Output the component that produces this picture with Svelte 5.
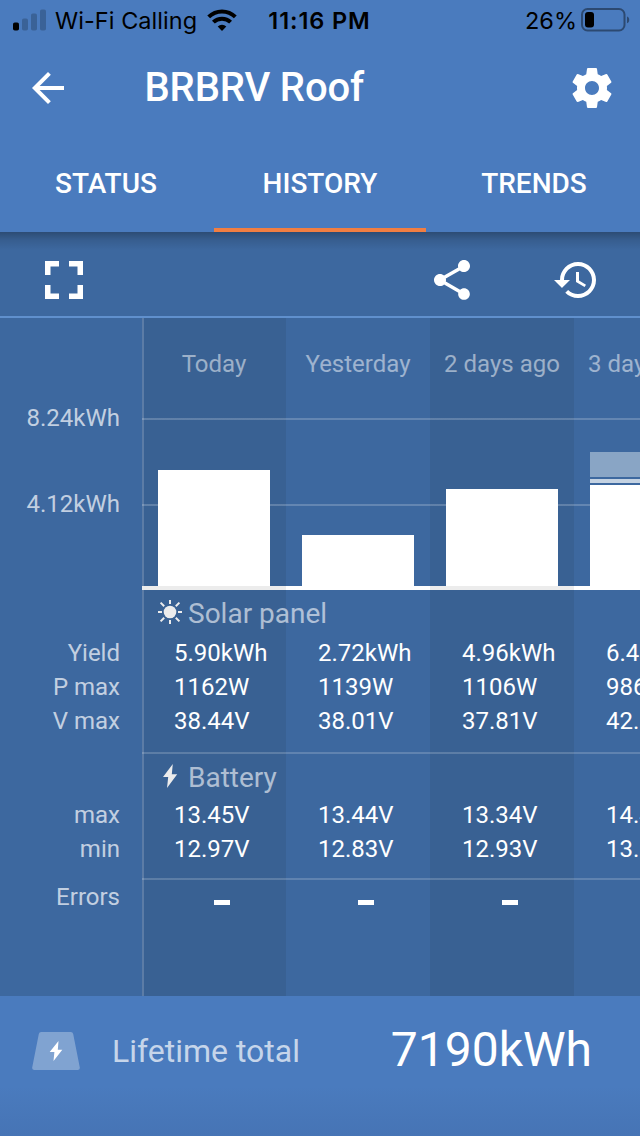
<script>
  const tabs = ['Status', 'History', 'Trends'];
  let activeTab = $state('History');

  // bar segments are stacked top to bottom, heights in px
  const days = [
    { label: 'Today', bulk: 116, yield: '5.90kWh', pMax: '1162W', vMax: '38.44V', max: '13.45V', min: '12.97V' },
    { label: 'Yesterday', bulk: 51, yield: '2.72kWh', pMax: '1139W', vMax: '38.01V', max: '13.44V', min: '12.83V' },
    { label: '2 days ago', bulk: 97, yield: '4.96kWh', pMax: '1106W', vMax: '37.81V', max: '13.34V', min: '12.93V' },
    { label: '3 days ago', float: 25, absorption: 4, bulk: 101, yield: '6.48kWh', pMax: '986W', vMax: '42.15V', max: '14.40V', min: '13.02V' }
  ];

  const solarRows = [
    { label: 'Yield', key: 'yield' },
    { label: 'P max', key: 'pMax' },
    { label: 'V max', key: 'vMax' }
  ];
  const batteryRows = [
    { label: 'max', key: 'max' },
    { label: 'min', key: 'min' }
  ];
</script>

{#snippet rows(list)}
  {#each list as row}
    <div class="row">
      <span class="label">{row.label}</span>
      <div class="cells">
        {#each days as day}
          <span class="value">{day[row.key]}</span>
        {/each}
      </div>
    </div>
  {/each}
{/snippet}

<div class="screen">
  <header>
    <div class="statusbar">
      <div class="carrier">
        <svg width="34" height="22" viewBox="0 0 34 22">
          <rect x="0" y="13.5" width="6" height="8" rx="1.8" />
          <g opacity="0.2">
            <rect x="9" y="9.5" width="6" height="12" rx="1.8" />
            <rect x="18" y="4.5" width="6" height="17" rx="1.8" />
            <rect x="27" y="0.5" width="6" height="21" rx="1.8" />
          </g>
        </svg>
        <span class="network">Wi-Fi Calling</span>
        <svg class="wifi" width="30" height="22" viewBox="0 0 30 22">
          <g fill="none" stroke="#000" stroke-width="4">
            <path d="M1.700 7.900a18.800 18.800 0 0 1 26.600 0" />
            <path d="M6.400 13.200a12.200 12.200 0 0 1 17.200 0" />
          </g>
          <path d="M15 22l-4.300-4.400a6.200 6.200 0 0 1 8.600 0z" />
        </svg>
      </div>
      <span class="clock">11:16 PM</span>
      <div class="power">
        <span>26%</span>
        <svg width="49" height="24" viewBox="0 0 49 24">
          <g opacity="0.4">
            <rect x="1" y="1" width="42.5" height="21.5" rx="5.5" fill="none" stroke="#000" stroke-width="2" />
            <path d="M46 8.5c1.6.6 2.2 1.8 2.2 3.4s-.6 2.8-2.2 3.400z" />
          </g>
          <rect x="4" y="4" width="9" height="15.5" rx="3" />
        </svg>
      </div>
    </div>

    <div class="appbar">
      <svg class="icon" viewBox="0 0 24 24"><path d="M20 11H7.83l5.59-5.59L12 4l-8 8 8 8 1.41-1.41L7.83 13H20v-2z" /></svg>
      <h1>BRBRV Roof</h1>
      <svg class="icon" viewBox="0 0 24 24"><path d="M19.43 12.98c.04-.32.07-.64.07-.98s-.03-.66-.07-.98l2.11-1.65c.19-.15.24-.42.12-.64l-2-3.46c-.12-.22-.39-.3-.61-.22l-2.49 1c-.52-.4-1.08-.73-1.69-.98l-.38-2.65C14.46 2.18 14.25 2 14 2h-4c-.25 0-.46.18-.49.42l-.38 2.65c-.61.25-1.17.59-1.69.98l-2.49-1c-.23-.09-.49 0-.61.22l-2 3.46c-.13.22-.07.49.12.64l2.11 1.65c-.04.32-.07.65-.07.98s.03.66.07.98l-2.11 1.65c-.19.15-.24.42-.12.64l2 3.46c.12.22.39.3.61.22l2.49-1c.52.4 1.08.73 1.69.98l.38 2.65c.03.24.24.42.49.42h4c.25 0 .46-.18.49-.42l.38-2.65c.61-.25 1.17-.59 1.69-.98l2.49 1c.23.09.49 0 .61-.22l2-3.46c.12-.22.07-.49-.12-.64l-2.11-1.65zM12 15.5c-1.93 0-3.5-1.57-3.5-3.5s1.57-3.5 3.5-3.5 3.5 1.57 3.5 3.5-1.57 3.5-3.5 3.5z" /></svg>
    </div>

    <nav>
      {#each tabs as tab}
        <button class={activeTab === tab ? 'tab active' : 'tab'} onclick={() => (activeTab = tab)}>{tab}</button>
      {/each}
    </nav>
  </header>

  <div class="toolbar">
    <svg class="expand" width="38" height="38" viewBox="0 0 38 38">
      <path d="M0 0h14v5.5H5.5V14H0zM24 0h14v14h-5.5V5.5H24zM0 24h5.5v8.5H14V38H0zM32.5 24H38v14H24v-5.5h8.5z" />
    </svg>
    <svg class="icon share" viewBox="0 0 24 24"><path d="M18 16.08c-.76 0-1.44.3-1.96.77L8.91 12.7c.05-.23.09-.46.09-.7s-.04-.47-.09-.7l7.05-4.11c.54.5 1.25.81 2.04.81 1.66 0 3-1.34 3-3s-1.34-3-3-3-3 1.34-3 3c0 .24.04.47.09.7L8.04 9.81C7.5 9.31 6.79 9 6 9c-1.66 0-3 1.34-3 3s1.34 3 3 3c.79 0 1.5-.31 2.04-.81l7.12 4.16c-.05.21-.08.43-.08.65 0 1.61 1.31 2.92 2.92 2.92 1.61 0 2.92-1.31 2.92-2.92s-1.31-2.92-2.92-2.92z" /></svg>
    <svg class="icon" viewBox="0 0 24 24"><path d="M13 3c-4.97 0-9 4.03-9 9H1l3.89 3.89.07.14L9 12H6c0-3.87 3.13-7 7-7s7 3.13 7 7-3.13 7-7 7c-1.93 0-3.68-.79-4.94-2.06l-1.42 1.42C8.27 19.99 10.51 21 13 21c4.97 0 9-4.03 9-9s-4.03-9-9-9zm-1 5v5l4.28 2.54.72-1.21-3.5-2.08V8H12z" /></svg>
  </div>

  <main>
    <div class="row names">
      <div class="cells">
        {#each days as day}
          <span class="day">{day.label}</span>
        {/each}
      </div>
    </div>

    <div class="row plot">
      <div class="axis">
        <span>8.24kWh</span>
        <span>4.12kWh</span>
      </div>
      <div class="cells">
        {#each days as day}
          <div class="bar">
            {#if day.float}<div class="float" style="height: {day.float}px"></div>{/if}
            {#if day.absorption}<div class="absorption" style="height: {day.absorption}px"></div>{/if}
            <div class="bulk" style="height: {day.bulk}px"></div>
          </div>
        {/each}
      </div>
    </div>

    <section class="solar">
      <h2>
        <svg width="24" height="24" viewBox="0 0 24 24">
          <circle cx="12" cy="12" r="6.3" />
          <path d="M12 0v4M12 20v4M0 12h4M20 12h4M2.6 2.6l3.6 3.6M17.8 17.8l3.6 3.6M2.6 21.4l3.6-3.6M17.8 6.2l3.6-3.6" stroke="#ececec" stroke-width="2" />
        </svg>
        Solar panel
      </h2>
      {@render rows(solarRows)}
    </section>

    <section class="battery">
      <h2>
        <svg width="24" height="24" viewBox="0 0 24 24"><path d="M14.800 0L5 13h5.200L9 24l10.200-13.800h-5.400z" /></svg>
        Battery
      </h2>
      {@render rows(batteryRows)}
    </section>

    <section class="errors">
      <div class="row">
        <span class="label">Errors</span>
        <div class="cells">
          {#each days as day}
            <span class="none"><i></i></span>
          {/each}
        </div>
      </div>
    </section>
  </main>

  <footer>
    <svg width="48" height="38" viewBox="0 0 48 38">
      <path d="M9.2 0h29.6q2 0 2.4 2l6.6 33.4q.4 2.6-2.2 2.6H2.4q-2.6 0-2.2-2.6L6.8 2q.4-2 2.400-2z" opacity="0.3" />
      <path d="M26.500 9.100L17.700 20h4.700l-.9 9 8.800-11.300h-4.500z" />
    </svg>
    <span class="caption">Lifetime total</span>
    <span class="total">7190kWh</span>
  </footer>
</div>

<style>
  :global(body) {
    margin: 0;
  }
  .screen {
    display: flex;
    flex-direction: column;
    width: 640px;
    height: 1136px;
    overflow: hidden;
    background: #3d689f;
    color: #fff;
    font-family: Roboto, sans-serif;
    font-size: 24px;
  }
  svg {
    display: block;
    flex: none;
    fill: #fff;
  }
  .icon {
    width: 48px;
    height: 48px;
  }

  header {
    height: 232px;
    background: #4a7bbe;
  }
  .statusbar {
    display: grid;
    grid-template-columns: 1fr auto 1fr;
    align-items: center;
    height: 40px;
    padding: 0 10px 0 13px;
    color: #000;
    font-family: Inter, sans-serif;
    font-size: 23.5px;
  }
  .statusbar svg {
    fill: #000;
  }
  .carrier,
  .power {
    display: flex;
    align-items: center;
    white-space: nowrap;
  }
  .network {
    margin-left: 8px;
    letter-spacing: .05px;
  }
  .wifi {
    margin-left: 10px;
  }
  .clock {
    margin-left: -4px;
    font-weight: 600;
    letter-spacing: .9px;
  }
  .power {
    justify-content: flex-end;
    gap: 4px;
  }
  .appbar {
    display: flex;
    align-items: center;
    height: 96px;
    padding: 0 24px;
  }
  h1 {
    flex: 1;
    margin: -2px 0 0 72.5px;
    font-size: 40px;
    font-weight: 500;
    letter-spacing: -.15px;
  }
  nav {
    display: grid;
    grid-template-columns: repeat(3, 212px);
    gap: 2px;
    height: 96px;
  }
  .tab {
    padding: 2px 0 0;
    border: 0;
    border-bottom: 4px solid transparent;
    background: none;
    color: #fff;
    font: 500 28px Roboto, sans-serif;
    text-transform: uppercase;
  }
  .tab.active {
    border-bottom-color: #f17e42;
  }

  .toolbar {
    display: flex;
    align-items: center;
    box-sizing: border-box;
    height: 86px;
    padding: 12px 40px 0 45px;
    border-bottom: 2px solid #6090cd;
    background: linear-gradient(rgba(0, 0, 0, .27), rgba(0, 0, 0, .1) 8px, transparent 18px);
  }
  .share {
    margin-left: auto;
    margin-right: 76px;
  }

  main {
    flex: 1;
    background:
      linear-gradient(#5c7ca6, #5c7ca6) 142px 0 / 2px 100% no-repeat,
      linear-gradient(90deg, #3d689f 142px, #396193 142px 286px, #3d689f 286px 430px, #396193 430px 574px, #3d689f 574px);
  }
  .row {
    display: grid;
    grid-template-columns: 142px 498px;
    height: 34px;
    line-height: 34px;
  }
  .cells {
    grid-column: 2;
    display: grid;
    grid-template-columns: repeat(4, 144px);
    overflow: hidden;
    white-space: nowrap;
  }
  .label,
  .axis {
    padding-right: 22px;
    text-align: right;
    color: rgba(255, 255, 255, .7);
  }
  .names {
    height: 100px;
    line-height: 92px;
  }
  .day {
    text-align: center;
    color: rgba(255, 255, 255, .5);
  }
  .plot {
    height: 172px;
  }
  .axis {
    display: flex;
    flex-direction: column;
    gap: 52px;
    margin-top: -17px;
  }
  .plot .cells {
    align-items: end;
    background:
      repeating-linear-gradient(90deg, #ececec 0 144px, #fff 144px 288px) 0 100% / 100% 4px no-repeat,
      linear-gradient(rgba(255, 255, 255, .2), rgba(255, 255, 255, .2)) 0 0 / 100% 2px no-repeat,
      linear-gradient(rgba(255, 255, 255, .2), rgba(255, 255, 255, .2)) 0 86px / 100% 2px no-repeat;
  }
  .bar {
    display: flex;
    flex-direction: column;
    gap: 2px;
    margin: 0 16px 4px;
    background: #3d689f;
  }
  .float {
    background: #89a5c5;
  }
  .absorption {
    background: #c4d2e2;
  }
  .bulk {
    background: #fff;
  }

  section {
    background: linear-gradient(rgba(255, 255, 255, .18), rgba(255, 255, 255, .18)) 142px 0 / 100% 2px no-repeat;
  }
  .solar {
    height: 162px;
    background: none;
  }
  .battery {
    height: 126px;
  }
  h2 {
    display: flex;
    align-items: center;
    gap: 6px;
    height: 46px;
    margin: 0 0 0 158px;
    color: rgba(255, 255, 255, .6);
    font-size: 28px;
    font-weight: 400;
  }
  h2 svg {
    fill: #ececec;
    margin-bottom: 2px;
  }
  .battery h2 {
    padding-top: 5px;
    height: 41px;
  }
  .battery h2 svg {
    margin-bottom: 3px;
  }
  .value {
    padding-left: 32px;
  }
  .errors {
    padding-top: 2px;
  }
  .none {
    display: flex;
    align-items: center;
    justify-content: center;
    padding: 10px 0 0 16px;
  }
  .none i {
    width: 16px;
    height: 5px;
    background: #fff;
  }

  footer {
    display: flex;
    align-items: center;
    box-sizing: border-box;
    height: 140px;
    padding: 0 48px 30px 32px;
    background: linear-gradient(#4a7bbe 90px, #4674b5);
  }
  .caption {
    margin: -1px 0 0 32px;
    font-size: 32px;
    color: rgba(255, 255, 255, .7);
  }
  .total {
    margin: -3px 0 0 auto;
    font-size: 48px;
  }
</style>
